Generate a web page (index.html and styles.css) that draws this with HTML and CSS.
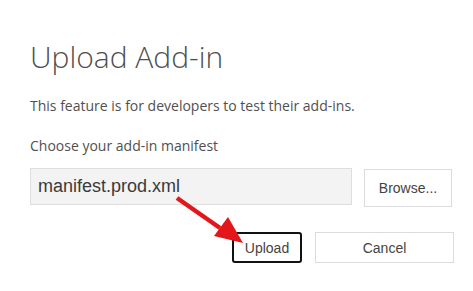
FILE: index.html
```html
<!DOCTYPE html>
<html lang="en">

<head>
    <meta charset="UTF-8">
    <title>Upload Add-in</title>
    <link rel="stylesheet" href="styles.css">
</head>

<body>
    <div class="dialog">
        <h1 class="title">Upload Add-in</h1>
        <p class="intro">This feature is for developers to test their add-ins.</p>
        <p class="label">Choose your add-in manifest</p>

        <div class="file-row">
            <div class="file-name">manifest.prod.xml</div>
            <button class="btn browse">Browse...</button>
        </div>

        <div class="actions">
            <button class="btn upload">Upload</button>
            <button class="btn cancel">Cancel</button>
        </div>

        <svg class="arrow" width="80" height="60" viewBox="0 0 80 60">
            <line x1="7" y1="8" x2="50" y2="38" stroke="#e3171b" stroke-width="4.5" />
            <polygon points="58,27 44,46 73,53" fill="#e3171b" />
        </svg>
    </div>
</body>

</html>
```

FILE: styles.css
```css
* {
    margin: 0;
    padding: 0;
    box-sizing: border-box;
}

body {
    font-family: 'Open Sans', sans-serif;
    background: #fff;
    color: #505050;
}

.dialog {
    position: relative;
    width: 473px;
    height: 291px;
    padding: 35px 20px 0 30px;
}

.title {
    font-size: 30px;
    font-weight: 300;
    line-height: 43px;
    color: #4f4f4f;
}

.intro {
    font-size: 14px;
    line-height: 20px;
    margin-top: 18px;
}

.label {
    font-size: 14px;
    line-height: 20px;
    margin-top: 20px;
}

.file-row {
    display: flex;
    margin-top: 12px;
}

.file-name {
    width: 322px;
    height: 37px;
    background: #f3f3f3;
    border: 1px solid #dedede;
    font-family: 'Liberation Sans', Arial, sans-serif;
    font-size: 18px;
    line-height: 35px;
    padding-left: 7px;
    color: #3a3a3a;
}

.btn {
    background: #fff;
    border: 1px solid #dcdcdc;
    font-family: 'Liberation Sans', Arial, sans-serif;
    font-size: 14px;
    color: #444;
}

.browse {
    width: 88px;
    height: 38px;
    margin-left: 12px;
    margin-top: 1px;
}

.actions {
    display: flex;
    justify-content: flex-end;
    gap: 13px;
    margin-top: 25px;
    width: 424px;
}

.upload {
    width: 70px;
    height: 31px;
    border: 2px solid #111;
    border-radius: 3px;
}

.cancel {
    width: 139px;
    height: 31px;
}

.arrow {
    position: absolute;
    left: 170px;
    top: 190px;
}
```
